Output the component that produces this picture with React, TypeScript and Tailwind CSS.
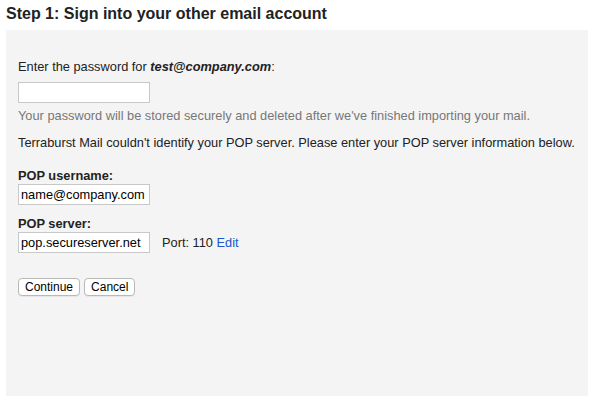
export default function App() {
  return (
    <div
      className="h-[402px] w-[594px] bg-white text-[12.8px] leading-4 text-[#222]"
      style={{ fontFamily: '"Liberation Sans", Arial, Helvetica, sans-serif' }}
    >
      <h1 className="px-[6px] pt-[5px] text-[16px] font-bold leading-[18px] text-[#222]">
        Step 1: Sign into your other email account
      </h1>
      <div className="mx-[6px] mt-[7px] h-[366px] bg-[#f4f4f4] px-3 pt-[29px]">
        <div>
          Enter the password for <b className="italic">test@company.com</b>:
        </div>
        <input
          type="password"
          className="mt-[7px] block h-[21px] w-[132px] border border-[#c8c8c8] bg-white outline-none"
        />
        <div className="mt-[5px] whitespace-nowrap text-[#777]">
          Your password will be stored securely and deleted after we've finished importing your mail.
        </div>
        <div className="mt-[11px] whitespace-nowrap">
          Terraburst Mail couldn't identify your POP server. Please enter your POP server information below.
        </div>
        <div className="mt-[17px] font-bold">POP username:</div>
        <input
          type="text"
          defaultValue="name@company.com"
          className="block h-[21px] w-[132px] border border-[#c8c8c8] bg-white px-[2px] text-[12.8px] text-black outline-none"
        />
        <div className="mt-[11px] font-bold">POP server:</div>
        <div className="flex items-center">
          <input
            type="text"
            defaultValue="pop.secureserver.net"
            className="block h-[21px] w-[132px] border border-[#c8c8c8] bg-white px-[2px] text-[12.8px] text-black outline-none"
          />
          <span className="ml-3">
            Port: 110 <a className="cursor-pointer text-[#2255cc]">Edit</a>
          </span>
        </div>
        <div className="mt-[25px] flex gap-1">
          <button className="h-[18px] rounded-[4px] border border-[#b9b9b9] bg-white px-[6px] text-[12px] leading-none text-black shadow-[0_1px_0_rgba(0,0,0,0.05)]">
            Continue
          </button>
          <button className="h-[18px] rounded-[4px] border border-[#b9b9b9] bg-white px-[6px] text-[12px] leading-none text-black shadow-[0_1px_0_rgba(0,0,0,0.05)]">
            Cancel
          </button>
        </div>
      </div>
    </div>
  );
}
